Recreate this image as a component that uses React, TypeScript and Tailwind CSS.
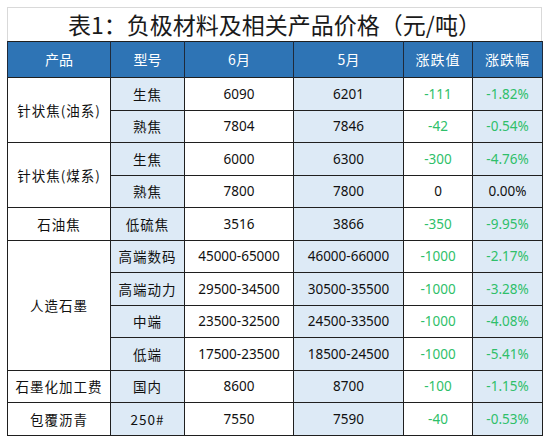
const rows: {
  product?: string;
  span?: number;
  model: string;
  jun: string;
  may: string;
  diff: string;
  pct: string;
}[] = [
  { product: "针状焦(油系)", span: 2, model: "生焦", jun: "6090", may: "6201", diff: "-111", pct: "-1.82%" },
  { model: "熟焦", jun: "7804", may: "7846", diff: "-42", pct: "-0.54%" },
  { product: "针状焦(煤系)", span: 2, model: "生焦", jun: "6000", may: "6300", diff: "-300", pct: "-4.76%" },
  { model: "熟焦", jun: "7800", may: "7800", diff: "0", pct: "0.00%" },
  { product: "石油焦", span: 1, model: "低硫焦", jun: "3516", may: "3866", diff: "-350", pct: "-9.95%" },
  { product: "人造石墨", span: 4, model: "高端数码", jun: "45000-65000", may: "46000-66000", diff: "-1000", pct: "-2.17%" },
  { model: "高端动力", jun: "29500-34500", may: "30500-35500", diff: "-1000", pct: "-3.28%" },
  { model: "中端", jun: "23500-32500", may: "24500-33500", diff: "-1000", pct: "-4.08%" },
  { model: "低端", jun: "17500-23500", may: "18500-24500", diff: "-1000", pct: "-5.41%" },
  { product: "石墨化加工费", span: 1, model: "国内", jun: "8600", may: "8700", diff: "-100", pct: "-1.15%" },
  { product: "包覆沥青", span: 1, model: "250#", jun: "7550", may: "7590", diff: "-40", pct: "-0.53%" },
];

const cjk = "font-['Noto_Sans_CJK_SC',sans-serif]";
const num = "font-['Noto_Sans','Noto_Sans_CJK_SC',sans-serif]";

export default function App() {
  return (
    <div className="h-[443px] w-[550px] bg-white pl-[7px] pt-[7px]">
      <div className="w-[535px]">
        <div
          className={`flex h-[34px] items-center justify-center border-x border-t border-[#d9d9d9] text-[23px] leading-none text-[#1a1a1a] ${cjk}`}
        >
          表1：负极材料及相关产品价格（元/吨）
        </div>
        <table className="w-full table-fixed border-collapse border border-[#1f1f1f] text-center text-[13.5px] text-[#111]">
          <colgroup>
            <col className="w-[103px]" />
            <col className="w-[74px]" />
            <col className="w-[109px]" />
            <col className="w-[110px]" />
            <col className="w-[69px]" />
            <col className="w-[70px]" />
          </colgroup>
          <thead>
            <tr className={`h-[36px] bg-[#2e74b5] text-[14px] text-white ${cjk}`}>
              <th className="border-x border-[#1f2a3a] font-normal">产品</th>
              <th className="border-x border-[#1f2a3a] font-normal">型号</th>
              <th className="border-x border-[#1f2a3a] font-normal">6月</th>
              <th className="border-x border-[#1f2a3a] font-normal">5月</th>
              <th className="border-x border-[#1f2a3a] font-normal tracking-[1px]">涨跌值</th>
              <th className="border-x border-[#1f2a3a] font-normal tracking-[1px]">涨跌幅</th>
            </tr>
          </thead>
          <tbody>
            {rows.map((r, i) => {
              const down = r.diff.startsWith("-");
              const tone = down ? "text-[#2fbf6a]" : "text-[#111]";
              return (
                <tr key={i} className="h-[32.5px]">
                  {r.product && (
                    <td
                      rowSpan={r.span}
                      className={`border border-[#1f1f1f] bg-white tracking-[1px] ${cjk}`}
                    >
                      {r.product}
                    </td>
                  )}
                  <td className={`border border-[#1f1f1f] bg-[#ddeaf6] tracking-[1px] ${cjk}`}>
                    {r.model}
                  </td>
                  <td className={`border border-[#1f1f1f] bg-white ${num}`}>{r.jun}</td>
                  <td className={`border border-[#1f1f1f] bg-[#ddeaf6] ${num}`}>{r.may}</td>
                  <td className={`border border-[#1f1f1f] bg-white ${num} ${tone}`}>{r.diff}</td>
                  <td className={`border border-[#1f1f1f] bg-[#ddeaf6] ${num} ${tone}`}>{r.pct}</td>
                </tr>
              );
            })}
          </tbody>
        </table>
      </div>
    </div>
  );
}
